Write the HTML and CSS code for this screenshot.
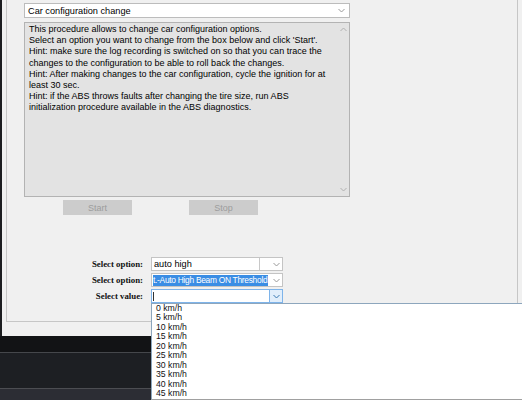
FILE: index.html
```html
<!DOCTYPE html>
<html lang="en">
<head>
    <meta charset="UTF-8">
    <title>Car configuration change</title>
    <link rel="stylesheet" href="styles.css">
</head>
<body>

<div class="window">
    <div class="group">
        <div class="combo">
            <span class="combo-text">Car configuration change</span>
            <svg class="chev" width="7" height="5" viewBox="0 0 7 5"><path d="M0.5 1 L3.5 4 L6.5 1" fill="none" stroke="#9a9a9a" stroke-width="1"/></svg>
        </div>

        <div class="memo">
            <div class="memo-text">
                This procedure allows to change car configuration options.<br>
                Select an option you want to change from the box below and click 'Start'.<br>
                Hint: make sure the log recording is switched on so that you can trace the changes to the configuration to be able to roll back the changes.<br>
                Hint: After making changes to the car configuration, cycle the ignition for at least 30 sec.<br>
                Hint: if the ABS throws faults after changing the tire size, run ABS initialization procedure available in the ABS diagnostics.
            </div>
            <div class="memo-scroll">
                <svg width="7" height="5" viewBox="0 0 7 5"><path d="M0.5 4 L3.5 1 L6.5 4" fill="none" stroke="#b0b0b0" stroke-width="1"/></svg>
                <svg width="7" height="5" viewBox="0 0 7 5"><path d="M0.5 1 L3.5 4 L6.5 1" fill="none" stroke="#b0b0b0" stroke-width="1"/></svg>
            </div>
        </div>

        <div class="actions">
            <button class="btn btn-start" disabled>Start</button>
            <button class="btn" disabled>Stop</button>
        </div>

        <div class="form">
            <label class="form-label">Select option:</label>
            <div class="select">
                <span class="select-edit">auto high</span>
                <span class="select-btn">
                    <svg width="7" height="5" viewBox="0 0 7 5"><path d="M0.5 1 L3.5 4 L6.5 1" fill="none" stroke="#9a9a9a" stroke-width="1"/></svg>
                </span>
            </div>

            <label class="form-label">Select option:</label>
            <div class="select">
                <span class="select-value"><span class="selected">t.-Auto High Beam ON Threshold</span></span>
                <span class="select-btn">
                    <svg width="7" height="5" viewBox="0 0 7 5"><path d="M0.5 1 L3.5 4 L6.5 1" fill="none" stroke="#9a9a9a" stroke-width="1"/></svg>
                </span>
            </div>

            <label class="form-label">Select value:</label>
            <div class="select select-focus">
                <span class="select-value"><span class="caret"></span></span>
                <span class="select-btn select-btn-hot">
                    <svg width="7" height="5" viewBox="0 0 7 5"><path d="M0.5 1 L3.5 4 L6.5 1" fill="none" stroke="#3a78b0" stroke-width="1"/></svg>
                </span>
            </div>
        </div>
    </div>
</div>

<div class="taskbar">
    <div class="bar-top"></div>
    <div class="bar-mid"></div>
    <div class="bar-bottom"></div>
</div>

<ul class="dropdown">
    <li>0 km/h</li>
    <li>5 km/h</li>
    <li>10 km/h</li>
    <li>15 km/h</li>
    <li>20 km/h</li>
    <li>25 km/h</li>
    <li>30 km/h</li>
    <li>35 km/h</li>
    <li>40 km/h</li>
    <li>45 km/h</li>
</ul>

</body>
</html>
```

FILE: styles.css
```css
body {
    margin: 0;
    width: 522px;
    height: 400px;
    overflow: hidden;
    position: relative;
    background-color: #1c1d20;
    font-family: "Liberation Sans", Arial, sans-serif;
    color: #111;
}
.window {
    margin-left: 2px;
    height: 336px;
    padding-left: 4px;
    background-color: #f0f0f0;
    box-sizing: border-box;
}
.group {
    width: 512px;
    height: 322px;
    padding: 3px 0 0 17px;
    border: 1px solid #c6c6c6;
    border-top: none;
    box-sizing: border-box;
}
.combo {
    width: 326px;
    height: 15px;
    display: flex;
    align-items: center;
    justify-content: space-between;
    padding: 0 4px 0 3px;
    background-color: white;
    border: 1px solid #bcbcbc;
    box-sizing: border-box;
    font-size: 9.2px;
    color: #000;
}
.chev {
    display: block;
}
.memo {
    width: 326px;
    height: 175px;
    margin-top: 4px;
    display: flex;
    background-color: #e3e3e3;
    border: 1px solid #b3b3b3;
    box-sizing: border-box;
}
.memo-text {
    flex: 1;
    padding: 1px 4px 0 4px;
    font-size: 9px;
    line-height: 11.2px;
    color: #000;
}
.memo-scroll {
    width: 11px;
    padding: 4px 0 4px 0;
    display: flex;
    flex-direction: column;
    justify-content: space-between;
    align-items: center;
}
.actions {
    display: flex;
    gap: 57px;
    margin-top: 3px;
    padding-left: 39px;
}
.btn {
    width: 69px;
    height: 15px;
    padding: 0;
    border: none;
    background-color: #cccccc;
    color: #9c9c9c;
    font-family: "Liberation Sans", Arial, sans-serif;
    font-size: 9px;
}
.form {
    display: grid;
    grid-template-columns: 119px 132px;
    column-gap: 8px;
    row-gap: 2px;
    margin-top: 42px;
}
.form-label {
    display: flex;
    align-items: center;
    justify-content: flex-end;
    height: 14px;
    font-family: "Liberation Serif", "Times New Roman", serif;
    font-weight: bold;
    font-size: 8.8px;
    color: #111;
}
.select {
    height: 14px;
    display: flex;
    background-color: white;
    border: 1px solid #c4c4c4;
    box-sizing: border-box;
    font-size: 9.2px;
}
.select-edit {
    width: 105px;
    display: flex;
    align-items: center;
    padding-left: 2px;
    border-right: 1px solid #c8c8c8;
    color: #000;
}
.select-value {
    flex: 1;
    display: flex;
    align-items: center;
    padding-left: 1px;
    overflow: hidden;
    white-space: nowrap;
}
.selected {
    background-color: #3a8de4;
    color: white;
    font-size: 8.4px;
    letter-spacing: -0.28px;
    line-height: 11px;
    padding-right: 1px;
}
.caret {
    width: 1px;
    height: 9px;
    background-color: #333;
}
.select-btn {
    width: 12px;
    flex-shrink: 0;
    margin-left: auto;
    display: flex;
    align-items: center;
    justify-content: center;
}
.select-focus {
    border-color: #7eb4ea;
}
.select-btn-hot {
    background-color: #e1eefb;
    border-left: 1px solid #7eb4ea;
}
.taskbar {
    height: 64px;
}
.bar-top {
    height: 16px;
    background-color: #121315;
    border-bottom: 1px solid #45474b;
}
.bar-mid {
    height: 35px;
    background-color: #1d1f23;
}
.bar-bottom {
    height: 12px;
    background-color: #2c2d34;
    border-top: 1px solid #4c4d52;
}
.dropdown {
    position: absolute;
    left: 151px;
    top: 303px;
    width: 380px;
    height: 97px;
    margin: 0;
    padding: 0 0 0 4px;
    list-style: none;
    background-color: white;
    border: 1px solid #8da6bd;
    border-bottom-color: #a0a0a0;
    box-sizing: border-box;
    font-size: 8.7px;
    line-height: 9.45px;
    color: #111;
}
```
